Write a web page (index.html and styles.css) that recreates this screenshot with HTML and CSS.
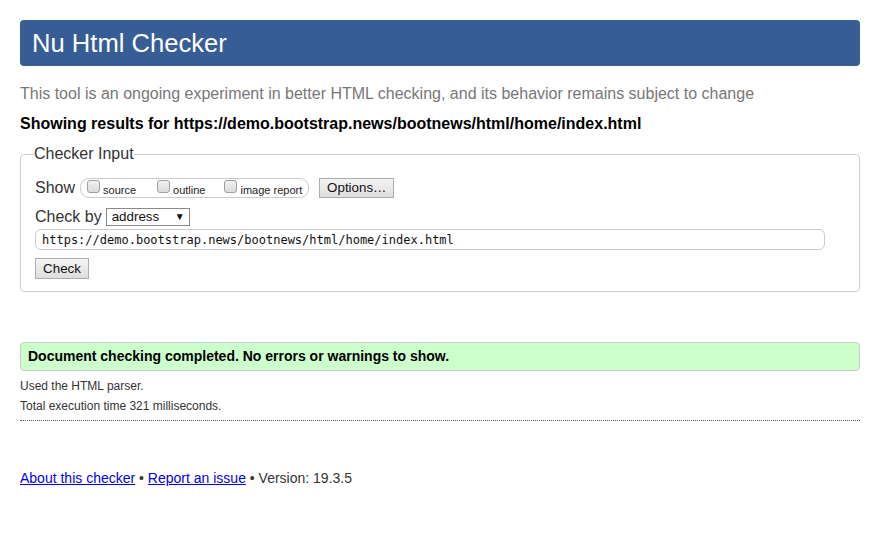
FILE: index.html
```html
<!DOCTYPE html>
<html lang="en">
<head>
<meta charset="utf-8">
<title>Nu Html Checker</title>
<link rel="stylesheet" href="styles.css">
</head>
<body>
<h1 class="title">Nu Html Checker</h1>
<p class="intro">This tool is an ongoing experiment in better HTML checking, and its behavior remains subject to change</p>
<p class="showing">Showing results for https://demo.bootstrap.news/bootnews/html/home/index.html</p>
<form class="checker-form">
  <fieldset class="checker">
    <legend class="legend">Checker Input</legend>
    <div class="row row-show">
      <span class="row-label">Show</span>
      <span class="group">
        <input class="cb" type="checkbox" id="cb-source"><label class="cb-label" for="cb-source">source</label>
        <input class="cb" type="checkbox" id="cb-outline"><label class="cb-label cb-label-2" for="cb-outline">outline</label>
        <input class="cb" type="checkbox" id="cb-image"><label class="cb-label cb-label-last" for="cb-image">image report</label>
      </span>
      <button class="btn btn-options" type="button">Options…</button>
    </div>
    <div class="row row-by">
      <span class="row-label">Check by</span>
      <span class="select-wrap">
        <select class="select"><option>address</option></select>
      </span>
    </div>
    <div class="row row-url">
      <input class="url" type="text" value="https://demo.bootstrap.news/bootnews/html/home/index.html">
    </div>
    <div class="row row-submit">
      <button class="btn btn-check" type="button">Check</button>
    </div>
  </fieldset>
</form>
<div class="success">Document checking completed. No errors or warnings to show.</div>
<p class="details">Used the HTML parser.</p>
<p class="details">Total execution time 321 milliseconds.</p>
<hr class="rule">
<p class="footer"><a href="#">About this checker</a> • <a href="#">Report an issue</a> • Version: 19.3.5</p>
</body>
</html>
```

FILE: styles.css
```css
html, body {
  margin: 0;
  background: #fff;
}
body {
  padding: 20px;
  font-family: "Liberation Sans", Arial, sans-serif;
  color: #222;
}
.title {
  margin: 0;
  height: 46px;
  line-height: 46px;
  padding: 0 12px;
  background: #365d95;
  color: #fff;
  font-size: 25.6px;
  font-weight: normal;
  border-radius: 4px;
}
.intro {
  margin: 19px 0 0;
  font-size: 16px;
  color: #777;
}
.showing {
  margin: 12px 0 0;
  font-size: 16px;
  font-weight: bold;
  color: #000;
}
.checker-form {
  margin: 0;
}
.checker {
  margin: 12px 0 0;
  padding: 0 14px 12px;
  border: 1px solid #ccc;
  border-radius: 4px;
  min-width: 0;
}
.legend {
  padding: 0;
  margin-left: -1px;
  font-size: 16px;
  color: #333;
}
.row {
  display: flex;
  align-items: center;
}
.row-label {
  font-size: 16px;
  color: #333;
}
.row-show {
  margin-top: 14px;
  height: 21px;
}
.group {
  display: flex;
  align-items: center;
  height: 18px;
  margin-left: 5px;
  padding: 0 6px 0 2px;
  border: 1px solid #ccc;
  border-radius: 9px;
}
.cb {
  appearance: none;
  -webkit-appearance: none;
  width: 13px;
  height: 13px;
  margin: 0 3px 0 4px;
  border: 1px solid #a0a0a0;
  border-radius: 3px;
  background: linear-gradient(#f0f0f0, #dcdcdc);
  box-sizing: border-box;
  position: relative;
  top: -1px;
}
.cb-label {
  font-size: 11px;
  color: #222;
  margin-right: 17px;
  position: relative;
  top: 2px;
}
.cb-label-2 {
  margin-right: 15px;
}
.cb-label-last {
  margin-right: 0;
}
.btn {
  font-family: "Liberation Sans", Arial, sans-serif;
  font-size: 13.33px;
  color: #111;
  height: 20px;
  padding: 0 6px;
  border: 1px solid #adadad;
  border-radius: 0;
  background: linear-gradient(#f4f4f4, #dedede);
  box-sizing: border-box;
}
.btn-options {
  margin-left: 10px;
  width: 75px;
}
.row-by {
  margin-top: 9px;
  height: 19px;
}
.select-wrap {
  position: relative;
  display: inline-block;
  margin-left: 4px;
}
.select {
  appearance: none;
  -webkit-appearance: none;
  width: 84px;
  height: 18px;
  padding: 0 0 0 5px;
  margin: 0;
  border: 1px solid #8a8a8a;
  border-radius: 0;
  background: #fff;
  font-family: "Liberation Sans", Arial, sans-serif;
  font-size: 13.33px;
  color: #111;
  box-sizing: border-box;
  display: block;
}
.select-wrap::after {
  content: "▼";
  position: absolute;
  right: 5px;
  top: 3px;
  font-size: 10px;
  line-height: 12px;
  color: #111;
  pointer-events: none;
}
.row-url {
  margin-top: 3px;
}
.url {
  width: 790px;
  height: 21px;
  box-sizing: border-box;
  padding: 0 6px;
  margin: 0;
  border: 1px solid #ccc;
  border-radius: 6px;
  font-family: "DejaVu Sans Mono", "Liberation Mono", monospace;
  font-size: 12px;
  color: #111;
  outline: none;
}
.row-submit {
  margin-top: 8px;
}
.btn-check {
  width: 54px;
  height: 21px;
}
.success {
  margin-top: 50px;
  height: 27px;
  line-height: 27px;
  padding: 0 7px;
  border: 1px solid #ccc;
  border-radius: 4px;
  background: #ccffcc;
  font-size: 14px;
  font-weight: bold;
  color: #000;
}
.details {
  margin: 0;
  font-size: 12px;
  line-height: 20px;
  color: #333;
}
.success + .details {
  margin-top: 5px;
}
.rule {
  margin: 4px 0 0;
  border: 0;
  border-top: 1px dotted #555;
  height: 0;
}
.footer {
  margin: 49px 0 0;
  font-size: 14px;
  color: #333;
}
.footer a {
  color: #0000ee;
}
```
